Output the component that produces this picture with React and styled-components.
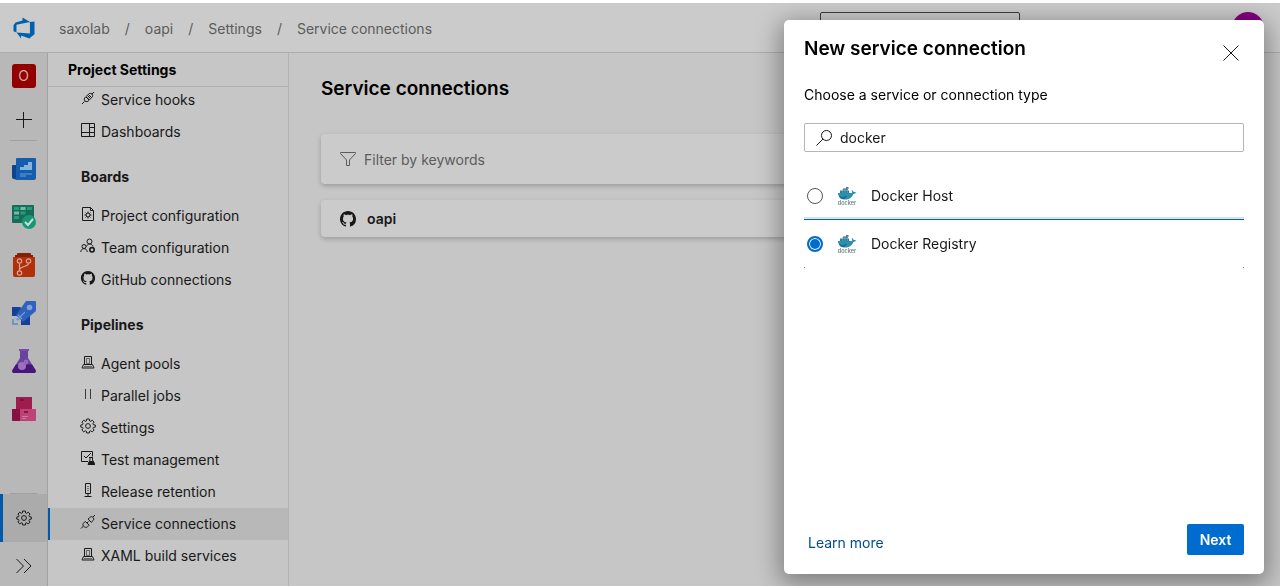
import React, { useState } from "react";
import styled, { createGlobalStyle } from "styled-components";

const GlobalStyle = createGlobalStyle`
  *, *::before, *::after { box-sizing: border-box; }
  body {
    margin: 0;
    background: #c6c6c6;
    color: #181818;
    font-family: Inter, "Liberation Sans", sans-serif;
    font-size: 14px;
    line-height: 20px;
  }
  button, input { font: inherit; color: inherit; }
  h1, h2, h3, p, ul { margin: 0; padding: 0; }
  ul { list-style: none; }
  a { color: inherit; text-decoration: none; }
`;

const Page = styled.div`
  display: flex;
  flex-direction: column;
  height: 100vh;
  overflow: hidden;
`;

const TopBar = styled.header`
  flex: none;
  display: flex;
  align-items: center;
  height: 53px;
  padding: 0 16px 0 12px;
  background: #cbcbcb;
  border-top: 3px solid #fff;
  border-bottom: 1px solid #acacac;
`;

const LogoLink = styled.a`
  display: flex;
  margin-right: 23px;
`;

const Crumbs = styled.nav`
  flex: 1;
  display: flex;
  gap: 15px;
  padding-top: 2px;
  color: #5c5c5c;
`;

const GlobalSearch = styled.input`
  width: 200px;
  height: 32px;
  margin-right: 212px;
  background: transparent;
  border: 1px solid #3d3d3d;
  border-radius: 2px;
`;

const Avatar = styled.button`
  width: 32px;
  height: 32px;
  padding: 0;
  border: 0;
  border-radius: 50%;
  background: #850080;
`;

const Body = styled.div`
  flex: 1;
  display: flex;
  min-height: 0;
`;

const Rail = styled.nav`
  flex: none;
  display: flex;
  flex-direction: column;
  align-items: center;
  width: 48px;
  background: #b8b8b8;
  border-right: 1px solid #a2a2a2;
`;

const RailButton = styled.button`
  flex: none;
  display: flex;
  align-items: center;
  justify-content: center;
  width: 100%;
  height: ${(p) => p.$height || 48}px;
  padding: ${(p) => (p.$low ? "4px 0 0" : "0")};
  border: 0;
  background: ${(p) => (p.$active ? "#ababab" : "transparent")};
  box-shadow: ${(p) => (p.$active ? "inset 3px 0 0 #0059ab" : "none")};
`;

const RailDivider = styled.hr`
  flex: none;
  width: 27px;
  height: 1px;
  margin: ${(p) => (p.$bottom ? "auto 0 0" : "0 0 4px")};
  border: 0;
  background: #a0a0a0;
`;

const ProjectTile = styled.span`
  display: flex;
  align-items: center;
  justify-content: center;
  width: 24px;
  height: 24px;
  border-radius: 3px;
  background: #930000;
  color: #d0a9a9;
`;

const Sidebar = styled.aside`
  flex: none;
  width: 241px;
  border-right: 1px solid #b3b3b3;
  overflow: hidden;
`;

const SidebarTitle = styled.h2`
  height: 34px;
  padding: 7px 20px;
  border-bottom: 1px solid #b0b0b0;
  color: #000;
  font-size: 14px;
  font-weight: 700;
`;

const SettingsNav = styled.nav`
  margin-top: -3px;
`;

const GroupTitle = styled.h3`
  height: 52px;
  padding: 19px 33px 0;
  font-size: 14px;
  font-weight: 700;
`;

const NavItem = styled.a`
  display: flex;
  align-items: center;
  gap: 5px;
  height: 32px;
  padding: 0 32px;
  background: ${(p) => (p.$active ? "#b8b8b8" : "transparent")};
  box-shadow: ${(p) => (p.$active ? "inset 2px 0 0 #0059ab" : "none")};

  svg { margin-bottom: 4px; }
`;

const Main = styled.main`
  flex: 1;
  min-width: 0;
  padding: 24px 32px;
`;

const PageTitle = styled.h1`
  margin-bottom: 33px;
  color: #000;
  font-size: 19px;
  line-height: 24px;
  font-weight: 600;
`;

const Card = styled.div`
  display: flex;
  align-items: center;
  gap: ${(p) => p.$gap}px;
  height: ${(p) => p.$height}px;
  margin-bottom: 16px;
  padding: 0 19px;
  border-radius: 4px;
  background: #cbcbcb;
  box-shadow: 0 2px 5px rgba(0, 0, 0, 0.22);
`;

const FilterInput = styled.input`
  flex: 1;
  padding: 2px 0 0;
  border: 0;
  background: transparent;
  &::placeholder { color: #5c5c5c; opacity: 1; }
`;

const ConnectionName = styled.a`
  font-weight: 600;
`;

const Overlay = styled.div`
  position: fixed;
  inset: 0;
  display: flex;
  justify-content: flex-end;
  padding: 20px 16px 12px;
`;

const Dialog = styled.section`
  display: flex;
  flex-direction: column;
  width: 480px;
  padding: 16px 20px 19px;
  border-radius: 5px;
  background: #fff;
  box-shadow: 0 6px 24px 4px rgba(0, 0, 0, 0.36);
`;

const DialogHeader = styled.div`
  display: flex;
  justify-content: space-between;
  margin-bottom: 17px;
`;

const DialogTitle = styled.h2`
  color: #000;
  font-size: 19px;
  line-height: 26px;
  font-weight: 600;
`;

const CloseButton = styled.button`
  display: flex;
  width: 26px;
  height: 32px;
  padding: 9px 5px 0;
  border: 0;
  background: transparent;
`;

const FieldLabel = styled.label`
  color: #000;
`;

const SearchField = styled.div`
  display: flex;
  align-items: center;
  gap: 8px;
  height: 29px;
  margin: 18px 0 20px;
  padding: 0 11px;
  border: 1px solid #b5b5b5;
  border-radius: 2px;
`;

const SearchInput = styled.input`
  flex: 1;
  padding: 0;
  border: 0;
  outline: 0;
  background: transparent;
`;

const Option = styled.label`
  display: flex;
  align-items: center;
  height: 48px;
  padding: 0 3px;
  ${(p) =>
    p.$checked &&
    `box-shadow: 0 -1px 0 #0b61b4, 0 -3px 0 #d3e4f5;
     background:
       linear-gradient(#4a94d8, #4a94d8) left bottom / 1px 1px no-repeat,
       linear-gradient(#4a94d8, #4a94d8) right bottom / 1px 1px no-repeat;`}
`;

const Radio = styled.input`
  appearance: none;
  width: 16px;
  height: 16px;
  margin: 0 14px 0 0;
  border: 1px solid #555;
  border-radius: 50%;
  background: #fff;

  &:checked {
    border: 2px solid #006cd0;
    background: #006cd0;
    box-shadow: inset 0 0 0 1px #fff;
  }
`;

const OptionText = styled.span`
  padding-left: 14px;
`;

const DialogFooter = styled.div`
  display: flex;
  align-items: center;
  justify-content: space-between;
  margin-top: auto;
  padding-left: 4px;
`;

const LearnMore = styled.a`
  padding-top: 6px;
  color: #004b8d;
`;

const NextButton = styled.button`
  width: 57px;
  height: 31px;
  padding: 0;
  border: 0;
  border-radius: 2px;
  background: #006cd0;
  color: #fff;
  font-weight: 600;
`;

function Line({ size = 16, width = 1, children }) {
  return (
    <svg width={size} height={size} viewBox="0 0 16 16" fill="none" stroke="currentColor" strokeWidth={width} aria-hidden="true">
      {children}
    </svg>
  );
}

const GITHUB =
  "M8 0C3.58 0 0 3.58 0 8c0 3.54 2.29 6.53 5.47 7.59.4.07.55-.17.55-.38 0-.19-.01-.82-.01-1.49-2.01.37-2.53-.49-2.69-.94-.09-.23-.48-.94-.82-1.13-.28-.15-.68-.52-.01-.53.63-.01 1.08.58 1.23.82.72 1.21 1.87.87 2.33.66.07-.52.28-.87.51-1.07-1.78-.2-3.64-.89-3.64-3.95 0-.87.31-1.59.82-2.15-.08-.2-.36-1.02.08-2.12 0 0 .67-.21 2.2.82.64-.18 1.32-.27 2-.27s1.36.09 2 .27c1.53-1.04 2.2-.82 2.2-.82.44 1.1.16 1.92.08 2.12.51.56.82 1.27.82 2.15 0 3.07-1.87 3.75-3.65 3.95.29.25.54.73.54 1.48 0 1.07-.01 1.93-.01 2.2 0 .21.15.46.55.38A8.01 8.01 0 0 0 16 8c0-4.42-3.58-8-8-8z";

const GitHub = ({ inset = 0 }) => (
  <svg width="16" height="16" viewBox={`${-inset} ${-inset} ${16 + inset * 2} ${16 + inset * 2}`} fill="currentColor" aria-hidden="true">
    <path d={GITHUB} />
  </svg>
);

const GEAR =
  "M6.7 1h2.6l.35 1.9 1 .42 1.6-1.1 1.83 1.83-1.1 1.6.42 1 1.9.35v2.1l-1.9.35-.42 1 1.1 1.6-1.83 1.83-1.6-1.1-1 .42L9.3 15H6.7l-.35-1.8-1-.42-1.6 1.1-1.83-1.83 1.1-1.6-.42-1L.8 9.1V7l1.8-.35.42-1-1.1-1.6 1.83-1.83 1.6 1.1 1-.42z";

const Gear = () => (
  <Line>
    <path d={GEAR} strokeLinejoin="round" />
    <circle cx="8" cy="8" r="2.4" />
  </Line>
);

const Server = () => (
  <Line>
    <path d="M4.5 10.5v-8h7v8" />
    <path d="M6.500 4.500h3v5h-3zM4 12.500h8" strokeOpacity=".55" />
    <path d="M2 14l1.500-3.500h9L14 14z" />
  </Line>
);

const ICONS = {
  hooks: (
    <Line>
      <path d="M2 14l2.5-2.5M11.5 4.500L14 2M5 11c-1.500-1.500-.5-3 .7-4.200L9 3.800c1-.9 2.200-.6 3 .2s1 2 .2 3L9 10.300C7.800 11.500 6.500 12.400 5 11zM6 7l3 3M7.500 7.500L10 5M8.500 8.500L11 6" />
    </Line>
  ),
  dashboards: (
    <Line>
      <path d="M1.500 1.500h13v13h-13zM1.500 10.500h8M9.500 1.500v13M9.500 5.500h5M9.500 10.500h5" />
    </Line>
  ),
  project: (
    <Line>
      <path d="M2.500 1.500h8l3 3v10h-11zM10.500 1.500v3h3" />
      <circle cx="8" cy="9" r="2" />
      <path d="M8 5.500v1.500M8 11v1.500M4.500 9H6M10 9h1.500M5.600 6.600l1 1M9.400 10.400l1 1M5.600 11.400l1-1M9.400 7.600l1-1" />
    </Line>
  ),
  team: (
    <Line>
      <circle cx="9.500" cy="3.500" r="2.500" />
      <circle cx="4" cy="8.500" r="2" />
      <path d="M.8 14c0-4.500 6.400-4.500 6.400 0M6.500 8.500c.5-1.500 1.500-2.500 3-2.500 1.800 0 3 .8 3.500 2.500" />
      <circle cx="12" cy="11.800" r="2.200" strokeWidth="1.600" />
    </Line>
  ),
  github: <GitHub inset={1} />,
  server: <Server />,
  parallel: (
    <Line>
      <path d="M5.500 3v10M10.500 3v10" strokeOpacity=".8" />
    </Line>
  ),
  gear: <Gear />,
  test: (
    <Line>
      <path d="M8 11.500H1.500v-10h11v5M4 6l2 2 5-5" />
      <path d="M9 7.500h4M10 7.500V10l-2 4.500h6.500L12.500 10V7.500" />
      <path d="M9.500 11.500h4l1 3H8.500z" fill="currentColor" />
    </Line>
  ),
  release: (
    <Line>
      <path d="M5.500 1.500h5v10h-5zM8 11.500v3M4.500 14.500h7" />
      <path d="M8 4v1M8 6v1M8 8v1" />
    </Line>
  ),
  connections: (
    <Line>
      <path d="M1 14.500l2.500-2.500M13 3l2-2M3.500 12c-1-1-.8-2 .2-3l1.600-1.600 3.800 3.800-1.600 1.600c-1.200 1-2.500.8-4-.8zM8.200 5l1.600-1.600c1-1 2.200-1 3.200 0s1 2.200 0 3.200L11.200 8.400zM7 9l1.500-1.500" />
    </Line>
  ),
};

const RailArt = ({ children }) => (
  <svg width="24" height="24" viewBox="0 0 24 24" aria-hidden="true">
    {children}
  </svg>
);

const SERVICES = [
  {
    name: "Overview",
    art: (
      <RailArt>
        <path d="M0 9a1 1 0 0 1 1-1h4v14H2a2 2 0 0 1-2-2z" fill="#0b458d" />
        <path d="M4 2a1 1 0 0 1 1-1h18a1 1 0 0 1 1 1v19a2 2 0 0 1-2 2H2c1.500 0 2-1 2-2z" fill="#155eae" />
        <path d="M8 13v-3h4V8h4V5h4v8z" fill="#84b4da" />
        <path d="M8 16h12v2h-6v2H8z" fill="#3b7fc1" />
      </RailArt>
    ),
  },
  {
    name: "Boards",
    art: (
      <RailArt>
        <rect y="0" width="22" height="18" rx="1" fill="#176c58" />
        <path d="M2 2h5v3H2zM8.500 2h5v3h-5zM15 2h5v3h-5zM8.500 6.500h5v3h-5zM2 11h5v3H2z" fill="#279b7c" />
        <path d="M2 6.500h5v3H2zM8.500 2h5v3h-5z" fill="#6dbda4" />
        <circle cx="17" cy="17" r="7" fill="#169878" />
        <path d="M13 17l3 3 5-6" fill="none" stroke="#c9ddd7" strokeWidth="2" />
      </RailArt>
    ),
  },
  {
    name: "Repos",
    art: (
      <RailArt>
        <path d="M5 2V1a1 1 0 0 1 1-1h12a1 1 0 0 1 1 1v1h2v3H3V2z" fill="#842104" />
        <path d="M1 4h22v18a2 2 0 0 1-2 2H3a2 2 0 0 1-2-2z" fill="#b1300c" />
        <g fill="none" stroke="#d8a596" strokeWidth="1.200">
          <circle cx="7.500" cy="8" r="2.200" />
          <circle cx="16.500" cy="8" r="2.200" />
          <circle cx="7.500" cy="20" r="2.200" />
          <path d="M7.500 10.200v7.600M16.500 10.200c0 4-9 2.500-9 7" />
        </g>
      </RailArt>
    ),
  },
  {
    name: "Pipelines",
    art: (
      <RailArt>
        <path d="M0 6h8l10 9v9H9v-6L5 15H0z" fill="#163f96" />
        <path d="M14 0h9a1 1 0 0 1 1 1v9L11 21 4 14z" fill="#2f61bd" />
        <circle cx="17.500" cy="6.500" r="2.800" fill="#7fa1d7" />
        <path d="M7 17l6-6M6 14l4 4" stroke="#7599d2" strokeWidth="1.200" />
        <path d="M0 18h2v4h4v2H0zM3 17l3 3 2-2" fill="#6f94cd" />
      </RailArt>
    ),
  },
  {
    name: "Test Plans",
    art: (
      <RailArt>
        <path d="M7 0h10v2H7z" fill="#7d4aa9" />
        <path d="M8 2h8v7l7.500 12c.8 1.500 0 3-2 3h-19c-2 0-2.800-1.500-2-3L8 9z" fill="#69419f" />
        <path d="M3.900 15.500h16.200L23.500 21c.8 1.500 0 3-2 3h-19c-2 0-2.800-1.500-2-3z" fill="#46167b" />
        <circle cx="10" cy="17" r="4" fill="#9b70bd" />
        <circle cx="14" cy="13" r="2.400" fill="#9169b6" />
      </RailArt>
    ),
  },
  {
    name: "Artifacts",
    art: (
      <RailArt>
        <path d="M4 0h16v12H4z" fill="#9c1d4e" />
        <path d="M8 2h4v2H8z" fill="#7a123b" />
        <path d="M0 12h8v12H1a1 1 0 0 1-1-1z" fill="#86103f" />
        <path d="M8 12h16v11a1 1 0 0 1-1 1H8z" fill="#bd4376" />
        <path d="M12 14h4v2h-4zM4 14h3v2H4z" fill="#8c1747" />
        <path d="M10 19h6v1h-6zM10 21h4v1h-4z" fill="#d07a9d" />
      </RailArt>
    ),
  },
];

const NAV_GROUPS = [
  {
    items: [
      ["hooks", "Service hooks"],
      ["dashboards", "Dashboards"],
    ],
  },
  {
    title: "Boards",
    items: [
      ["project", "Project configuration"],
      ["team", "Team configuration"],
      ["github", "GitHub connections"],
    ],
  },
  {
    title: "Pipelines",
    items: [
      ["server", "Agent pools"],
      ["parallel", "Parallel jobs"],
      ["gear", "Settings"],
      ["test", "Test management"],
      ["release", "Release retention"],
      ["connections", "Service connections"],
      ["server", "XAML build services"],
    ],
  },
];

const DockerLogo = () => (
  <svg width="20" height="20" viewBox="0 0 20 20" aria-hidden="true">
    <path d="M1 7h14c.3-1 .1-2-.4-3 1.200.3 1.900 1.200 2 2.100 1 0 1.800.1 2.400.5-.5 1-1.300 1.400-2.600 1.400C15 11.500 12.500 13.500 8 13.500 3.500 13.500 1.200 11 1 7z" fill="#2a90ad" />
    <path d="M3 4.500h9V7H3z" fill="#287e97" />
    <path d="M6 2.500h5v2H6zM9 1h2.500v2H9z" fill="#3f7f90" />
    <path d="M2 10c3 1.500 6 1 8-.5-.5 2-2 3.500-4 3.600C4 13 2.700 11.700 2 10z" fill="#1c6b88" />
    <path d="M5.500 3v4M8 2v5M10.500 2v5" stroke="#7fb6c4" strokeWidth=".5" />
    <text x="10" y="18.500" textAnchor="middle" fontFamily="Inter, sans-serif" fontSize="5.500" fontWeight="600" fill="#74858c">docker</text>
  </svg>
);

const CRUMBS = ["saxolab", "oapi", "Settings", "Service connections"];
const CONNECTION_TYPES = ["Docker Host", "Docker Registry"];

export default function App() {
  const [query, setQuery] = useState("docker");
  const [type, setType] = useState("Docker Registry");

  return (
    <>
      <GlobalStyle />
      <Page>
        <TopBar>
          <LogoLink href="#" aria-label="Azure DevOps">
            <svg width="24" height="24" viewBox="0 0 16 16" aria-hidden="true">
              <path
                d="M15 3.622v8.512L11.5 15l-5.425-1.975v1.958L3.004 10.970l8.951.7V4.005L15 3.622zm-2.984.428L6.994 1v2.001L2.382 4.356 1 6.130v4.029l1.978.873V5.869l9.038-1.818z"
                fill="#0060b0"
              />
            </svg>
          </LogoLink>
          <Crumbs aria-label="Breadcrumb">
            {CRUMBS.map((crumb, i) => (
              <React.Fragment key={crumb}>
                {i > 0 && <span>/</span>}
                <a href="#">{crumb}</a>
              </React.Fragment>
            ))}
          </Crumbs>
          <GlobalSearch type="search" aria-label="Search" />
          <Avatar aria-label="Account" />
        </TopBar>
        <Body>
          <Rail aria-label="Services">
            <RailButton $height={46} aria-label="Project oapi">
              <ProjectTile>O</ProjectTile>
            </RailButton>
            <RailButton $height={41} aria-label="Add">
              <Line>
                <path d="M7.500 0v16M0 7.500h16" />
              </Line>
            </RailButton>
            <RailDivider />
            {SERVICES.map((s) => (
              <RailButton key={s.name} aria-label={s.name}>
                {s.art}
              </RailButton>
            ))}
            <RailDivider $bottom />
            <RailButton $active aria-label="Project settings">
              <Gear />
            </RailButton>
            <RailButton $height={44} $low aria-label="Expand">
              <Line>
                <path d="M.5 1l7 7-7 7M8 1l7 7-7 7" />
              </Line>
            </RailButton>
          </Rail>
          <Sidebar>
            <SidebarTitle>Project Settings</SidebarTitle>
            <SettingsNav aria-label="Project settings">
              {NAV_GROUPS.map((group, i) => (
                <React.Fragment key={i}>
                  {group.title && <GroupTitle>{group.title}</GroupTitle>}
                  <ul>
                    {group.items.map(([icon, label]) => (
                      <li key={label}>
                        <NavItem href="#" $active={label === "Service connections"}>
                          {ICONS[icon]}
                          {label}
                        </NavItem>
                      </li>
                    ))}
                  </ul>
                </React.Fragment>
              ))}
            </SettingsNav>
          </Sidebar>
          <Main>
            <PageTitle>Service connections</PageTitle>
            <Card $height={50} $gap={8}>
              <svg width="16" height="16" viewBox="0 0 16 16" fill="none" stroke="#5c5c5c" aria-hidden="true">
                <path d="M.5 1.500h15v1L9.500 9v5.500h-3V9L.5 2.500z" />
              </svg>
              <FilterInput placeholder="Filter by keywords" aria-label="Filter by keywords" />
            </Card>
            <Card $height={37} $gap={11}>
              <GitHub />
              <ConnectionName href="#">oapi</ConnectionName>
            </Card>
          </Main>
        </Body>
      </Page>
      <Overlay>
        <Dialog role="dialog" aria-labelledby="dialog-title">
          <DialogHeader>
            <DialogTitle id="dialog-title">New service connection</DialogTitle>
            <CloseButton aria-label="Close">
              <Line>
                <path d="M.5.5l15 15M15.500.5l-15 15" />
              </Line>
            </CloseButton>
          </DialogHeader>
          <FieldLabel htmlFor="type-search">Choose a service or connection type</FieldLabel>
          <SearchField>
            <Line>
              <circle cx="10.500" cy="5.500" r="5" />
              <path d="M7 9L.5 15.500" />
            </Line>
            <SearchInput id="type-search" value={query} onChange={(e) => setQuery(e.target.value)} />
          </SearchField>
          {CONNECTION_TYPES.map((name) => (
            <Option key={name} $checked={type === name}>
              <Radio type="radio" name="connection-type" checked={type === name} onChange={() => setType(name)} />
              <DockerLogo />
              <OptionText>{name}</OptionText>
            </Option>
          ))}
          <DialogFooter>
            <LearnMore href="#">Learn more</LearnMore>
            <NextButton>Next</NextButton>
          </DialogFooter>
        </Dialog>
      </Overlay>
    </>
  );
}
